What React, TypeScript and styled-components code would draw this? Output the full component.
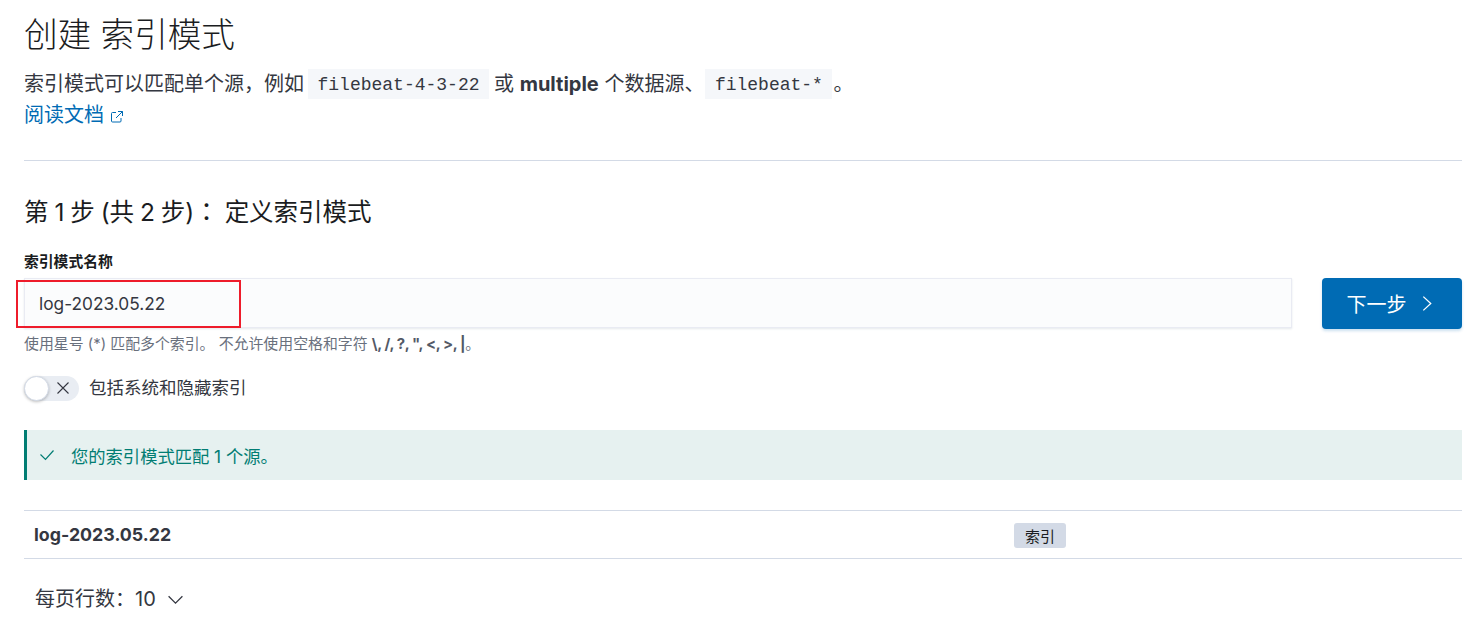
import React from "react";
import styled, { createGlobalStyle } from "styled-components";

const Global = createGlobalStyle`
  html, body { margin: 0; padding: 0; background: #fff; }
  body { font-family: Inter, "Noto Sans CJK SC", sans-serif; color: #343741; overflow: hidden; }
`;
const Page = styled.div`
  width: 1475px; height: 625px; box-sizing: border-box; padding: 14px 13px 0 24px; overflow: hidden;
`;
const Title = styled.h1`
  margin: 0; font-size: 33.6px; line-height: 42px; font-weight: 300; color: #1a1c21;
`;
const Desc = styled.div`
  margin-top: 13px; font-size: 20px; color: #343741;
`;
const DescLine = styled.p`
  margin: 0; height: 31px; line-height: 31px; white-space: nowrap;
`;
const Code = styled.code<{ $tight?: boolean }>`
  display: inline-block; margin: ${(p) => (p.$tight ? "0 1px 0 1px" : "0 5px 0 4px")}; padding: 0 9.5px; height: 30px; line-height: 32px;
  background: #f5f7fa; font-family: "Liberation Mono", "DejaVu Sans Mono", monospace; font-size: 18px; color: #343741;
  vertical-align: top;
`;
const DocLink = styled.a`
  display: inline-flex; align-items: center; gap: 6px; color: #006bb4;
  svg { margin-top: 2px; }
`;
const Rule = styled.hr`
  margin: 29px 0 0; border: 0; height: 1px; background: #d3dae6;
`;
const StepTitle = styled.h2`
  margin: 32px 0 0; font-size: 24.5px; line-height: 36px; font-weight: 400; color: #1a1c21; word-spacing: -1px;
`;
const Colon = styled.span`
  font-family: "Noto Sans CJK JP", sans-serif;
`;
const Label = styled.label`
  display: block; margin-top: 23px; font-size: 14.8px; line-height: 18px; font-weight: 700; color: #1a1c21;
`;
const FormRow = styled.div`
  display: flex; align-items: flex-start; gap: 30px; margin-top: 7px;
`;
const InputWrap = styled.div`
  position: relative; flex: 1;
`;
const InputBox = styled.div`
  height: 50px; box-sizing: border-box; padding: 0 14px; display: flex; align-items: center;
  background: #fbfcfd; border: 1px solid #e9ebf3; box-shadow: 0 1px 2px rgba(152,162,179,.25);
  font-size: 17.3px; color: #343741;
`;
const Highlight = styled.div`
  position: absolute; left: -8px; top: 2px; width: 225px; height: 48px; border: 2px solid #ee1c2b; box-sizing: border-box; pointer-events: none;
`;
const NextButton = styled.button`
  width: 140px; height: 51px; border: 0; border-radius: 4px; background: #006bb4; color: #fff;
  font: 400 20px Inter, "Noto Sans CJK SC", sans-serif; display: flex; align-items: center; justify-content: center; gap: 11px; padding: 0 3px 0 0;
  box-shadow: 0 2px 3px rgba(0,107,180,.2);
`;
const Help = styled.div`
  margin-top: 5px; font-size: 14.9px; line-height: 20px; color: #69707d;
  b { font-weight: 700; color: #535966; letter-spacing: -0.35px; }
`;
const ToggleRow = styled.div`
  display: flex; align-items: center; gap: 10px; margin-top: 21px; font-size: 17.5px; line-height: 26px; color: #343741;
`;
const Switch = styled.span`
  width: 55px; height: 25px; border-radius: 13px; background: #e9edf3; position: relative; display: flex; align-items: center; justify-content: flex-end; padding-right: 9px; box-sizing: border-box;
`;
const Knob = styled.span`
  position: absolute; left: 0; top: 0; width: 25px; height: 25px; box-sizing: border-box; border-radius: 50%; background: #fff;
  border: 1px solid #d3dae6; box-shadow: 0 1px 3px rgba(0,0,0,.25);
`;
const Callout = styled.div`
  margin-top: 29px; height: 50px; box-sizing: border-box; display: flex; align-items: center; gap: 16px; padding-left: 12px;
  background: #e6f1f0; border-left: 3px solid #017d73; color: #017d73; font-size: 17.3px;
`;
const Table = styled.div`
  margin-top: 30px; border-top: 1px solid #d3dae6; border-bottom: 1px solid #d3dae6; height: 47px; display: flex; align-items: center;
`;
const NameCell = styled.div`
  width: 990px; padding-left: 10px; box-sizing: border-box; font-size: 17.8px; font-weight: 700; color: #343741;
`;
const Badge = styled.span`
  width: 52px; height: 25px; border-radius: 3px; background: #d3dae6; color: #1a1c21; font-size: 15px; display: flex; align-items: center; justify-content: center; margin-top: 1px;
`;
const Pager = styled.div`
  display: flex; align-items: center; gap: 11px; margin: 27px 0 0 11px; font-size: 20px; line-height: 26px; color: #343741;
`;

const Ext = () => (
  <svg width="14" height="14" viewBox="0 0 14 14" fill="none" stroke="#006bb4" strokeWidth="1">
    <path d="M6 2.5H2.5a1 1 0 0 0-1 1V11a1 1 0 0 0 1 1H10a1 1 0 0 0 1-1V8M8 1.5h4.5V6M12.5 1.5 6 8" />
  </svg>
);
const Chevron = ({ dir, color, size }: { dir: "right" | "down"; color: string; size: number }) => (
  <svg width={size} height={size} viewBox="0 0 16 16" fill="none" stroke={color} strokeWidth="1.2">
    <path d={dir === "right" ? "M5 1.5 12 8l-7 6.5" : "M1.5 5 8 11.5 14.5 5"} />
  </svg>
);

export default function App() {
  return (
    <Page>
      <Global />
      <Title>创建 索引模式</Title>
      <Desc>
        <DescLine>
          索引模式可以匹配单个源，例如<Code>filebeat-4-3-22</Code>或 <strong>multiple</strong> 个数据源、<Code $tight>filebeat-*</Code>。
        </DescLine>
        <DescLine>
          <DocLink>阅读文档 <Ext /></DocLink>
        </DescLine>
      </Desc>
      <Rule />
      <StepTitle>第 1 步 (共 2 步)<Colon>：</Colon> 定义索引模式</StepTitle>
      <Label>索引模式名称</Label>
      <FormRow>
        <InputWrap>
          <InputBox>log-2023.05.22</InputBox>
          <Highlight />
        </InputWrap>
        <NextButton>下一步 <Chevron dir="right" color="#fff" size={17} /></NextButton>
      </FormRow>
      <Help>使用星号 (*) 匹配多个索引。 不允许使用空格和字符 <b>\, /, ?, ", &lt;, &gt;, |</b>。</Help>
      <ToggleRow>
        <Switch>
          <Knob />
          <svg width="14" height="14" viewBox="0 0 14 14" stroke="#343741" strokeWidth="1.1"><path d="M1.5 1.5l11 11M12.5 1.5l-11 11" /></svg>
        </Switch>
        包括系统和隐藏索引
      </ToggleRow>
      <Callout>
        <svg width="16" height="12" viewBox="0 0 16 12" fill="none" stroke="#017d73" strokeWidth="1.2"><path d="M1.5 5.5 6.5 10.5 14.5 1.5" /></svg>
        您的索引模式匹配 1 个源。
      </Callout>
      <Table>
        <NameCell>log-2023.05.22</NameCell>
        <Badge>索引</Badge>
      </Table>
      <Pager>每页行数：10 <Chevron dir="down" color="#343741" size={17} /></Pager>
    </Page>
  );
}
